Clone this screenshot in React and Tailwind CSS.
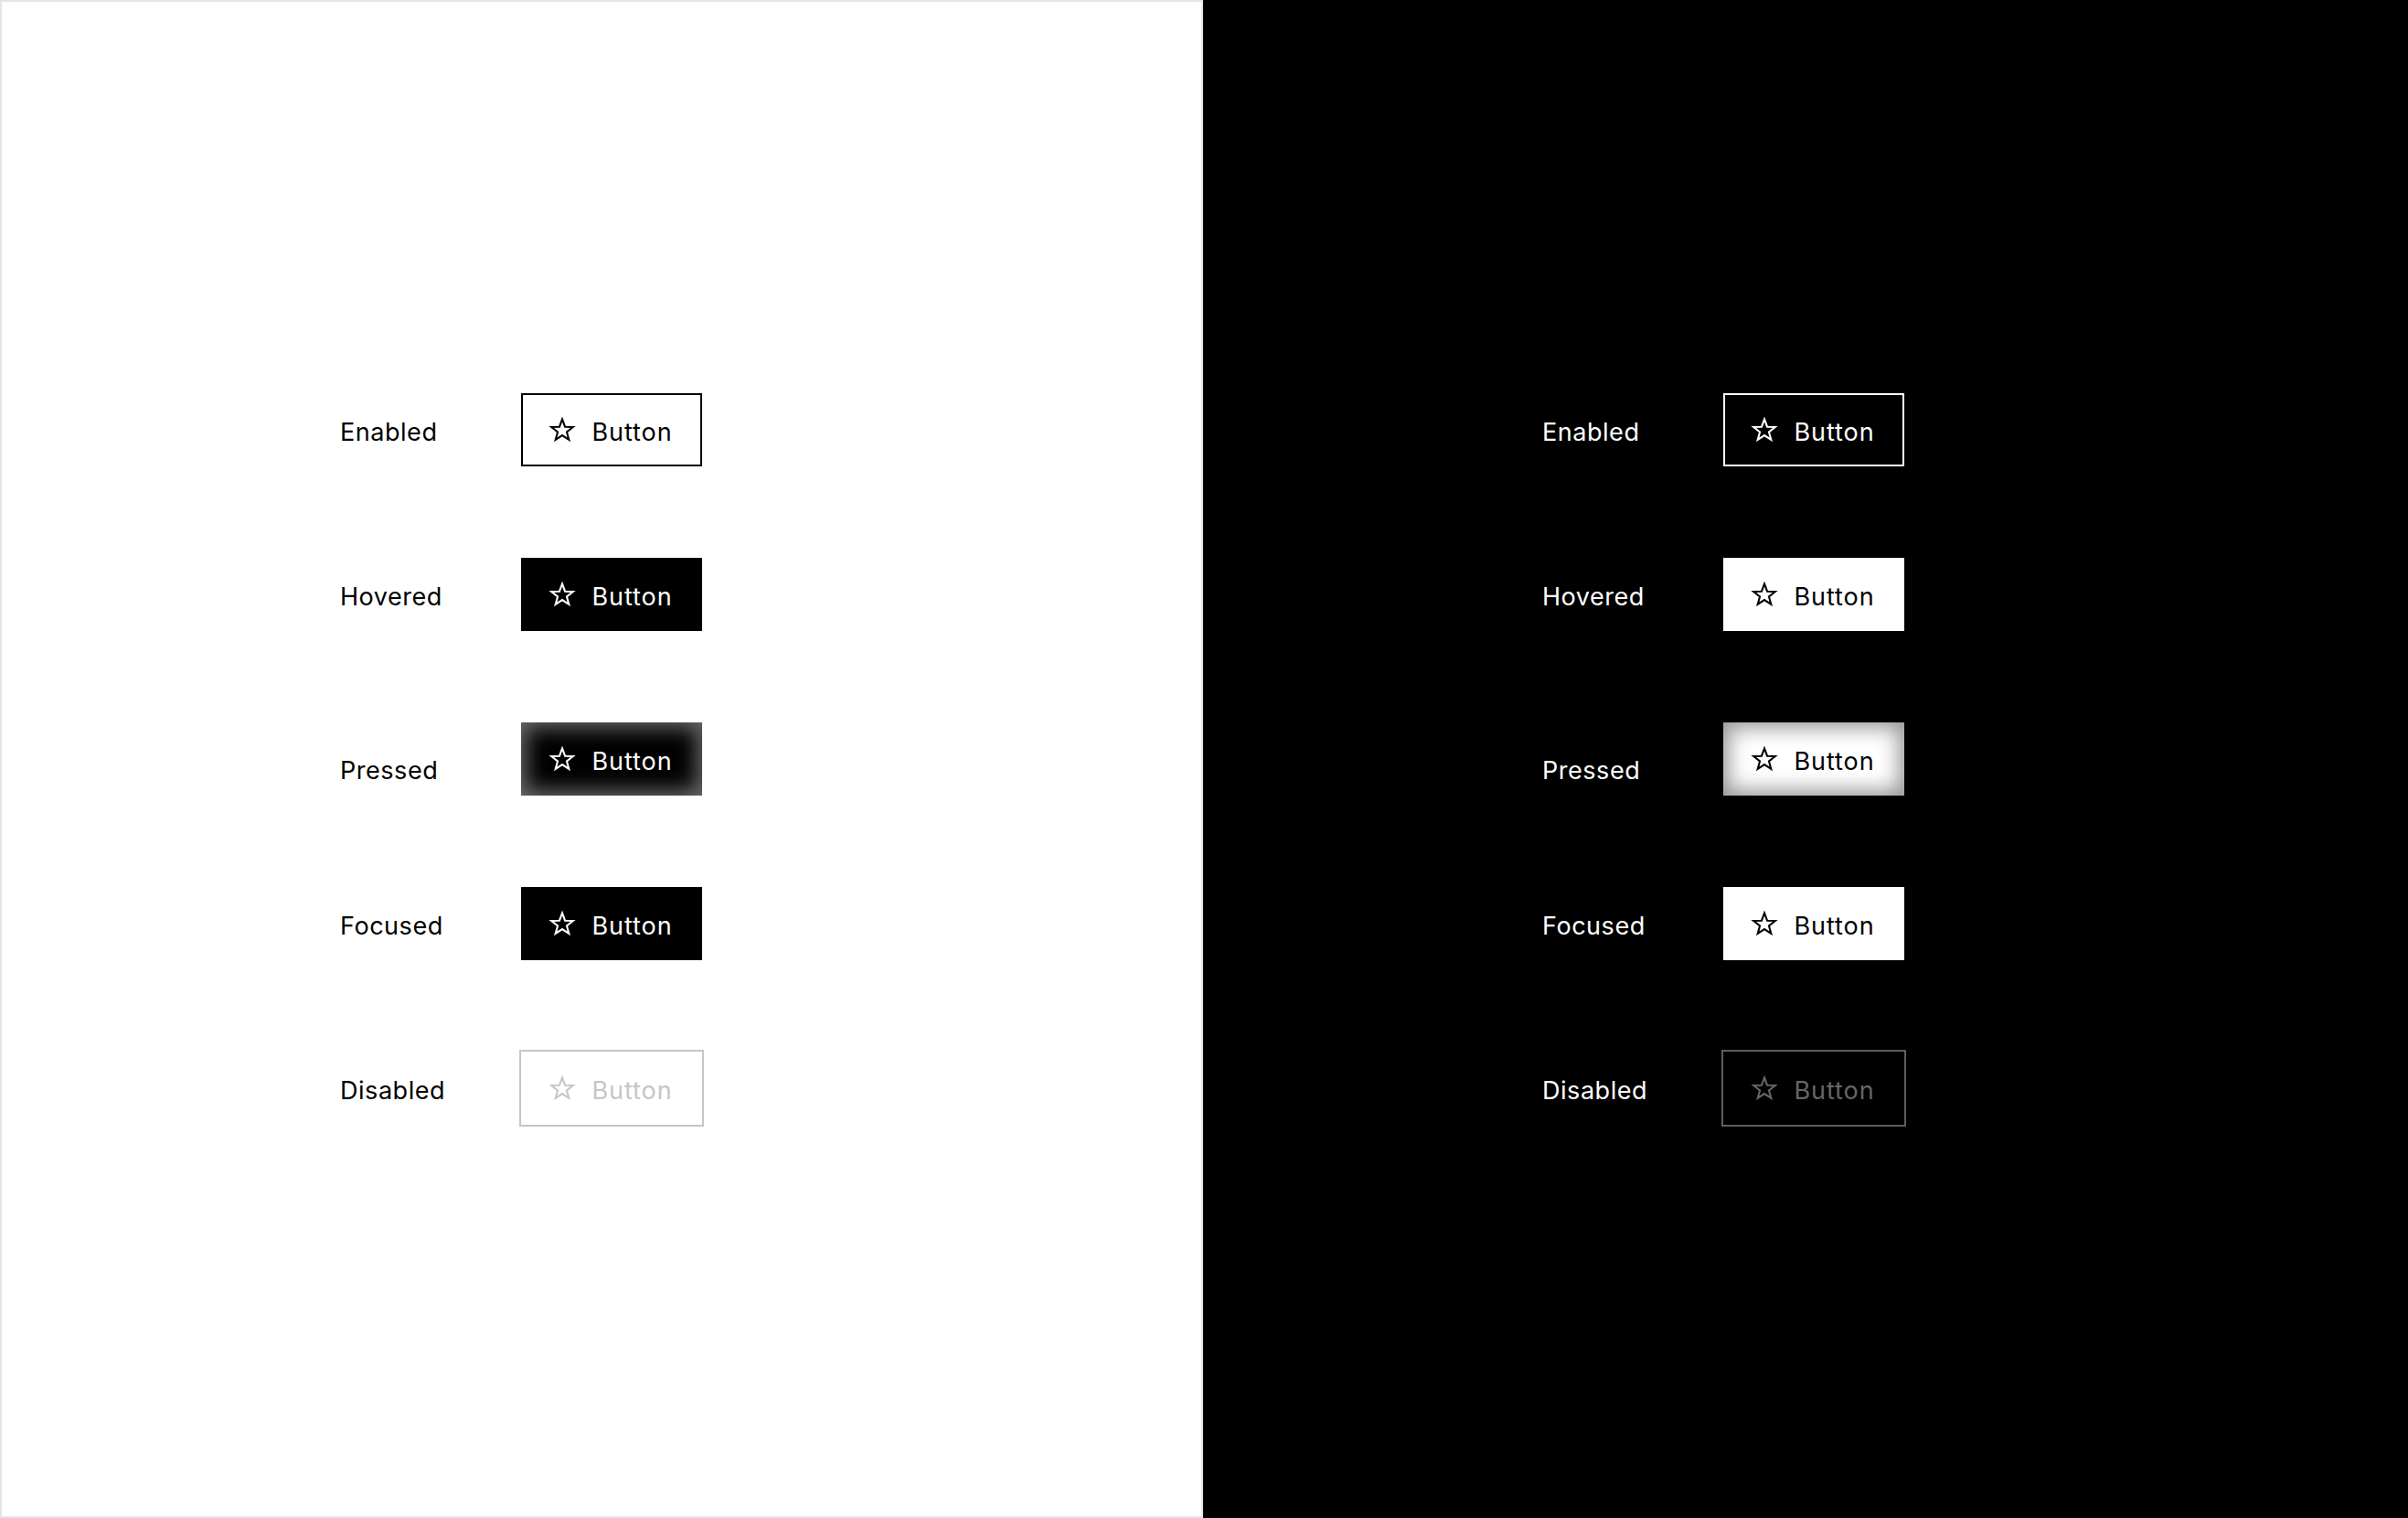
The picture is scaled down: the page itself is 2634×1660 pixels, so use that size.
const states = ['Enabled', 'Hovered', 'Pressed', 'Focused', 'Disabled'];

function StarIcon({ className }) {
  return (
    <svg viewBox="0 0 24 24" className={className} fill="none" overflow="visible">
      <polygon
        points="12,1.3 14.82,8.92 22.94,9.25 16.57,14.28 18.76,22.1 12,17.6 5.24,22.1 7.43,14.28 1.06,9.25 9.18,8.92"
        stroke="currentColor"
        strokeWidth="1.9"
        strokeLinejoin="miter"
        strokeMiterlimit="4"
      />
    </svg>
  );
}

// per-theme button styles, keyed by state
const lightButtons = {
  Enabled: 'w-[198px] h-[80px] border-2 border-black bg-white text-black',
  Hovered: 'w-[198px] h-[80px] bg-black text-white',
  Pressed: 'w-[198px] h-[80px] bg-black text-white shadow-[inset_0_0_22px_6px_rgba(255,255,255,0.42)]',
  Focused: 'w-[198px] h-[80px] bg-black text-white',
  Disabled: 'w-[202px] h-[84px] -mx-[2px] border-2 border-[#c6c6c6] bg-white text-[#c6c6c6]',
};

const darkButtons = {
  Enabled: 'w-[198px] h-[80px] border-2 border-white bg-black text-white',
  Hovered: 'w-[198px] h-[80px] bg-white text-black',
  Pressed: 'w-[198px] h-[80px] bg-white text-black shadow-[inset_0_0_22px_6px_rgba(0,0,0,0.42)]',
  Focused: 'w-[198px] h-[80px] bg-white text-black',
  Disabled: 'w-[202px] h-[84px] -mx-[2px] border-2 border-[#5e5e5e] bg-black text-[#666666]',
};

function StateRow({ state, buttonClass }) {
  return (
    <div className="flex items-center h-[80px]">
      {/* the "Pressed" label sits a little lower than the others */}
      <span className={`w-[198px] ${state === 'Pressed' ? 'pt-[25px]' : 'pt-[5px]'}`}>{state}</span>
      <button className={`flex items-center justify-center gap-[19px] shrink-0 ${buttonClass}`}>
        <StarIcon className="w-[26px] h-[26px]" />
        <span className="pt-[5px] tracking-[0.035em]">Button</span>
      </button>
    </div>
  );
}

function Panel({ dark }) {
  const buttons = dark ? darkButtons : lightButtons;
  return (
    <div
      className={
        dark
          ? 'w-[1318px] h-[1660px] bg-black text-white pt-[430px] pl-[371px]'
          : 'w-[1316px] h-[1660px] bg-white text-black border-2 border-[#e5e5e5] pt-[428px] pl-[370px]'
      }
    >
      <div className="flex flex-col gap-[100px]">
        {states.map((s) => (
          <StateRow key={s} state={s} buttonClass={buttons[s]} />
        ))}
      </div>
    </div>
  );
}

export default function App() {
  return (
    <div
      className="flex w-[2634px] h-[1660px] text-[27px] leading-none tracking-[0.02em]"
      style={{ fontFamily: 'Inter, "Noto Sans", sans-serif' }}
    >
      <Panel />
      <Panel dark />
    </div>
  );
}
